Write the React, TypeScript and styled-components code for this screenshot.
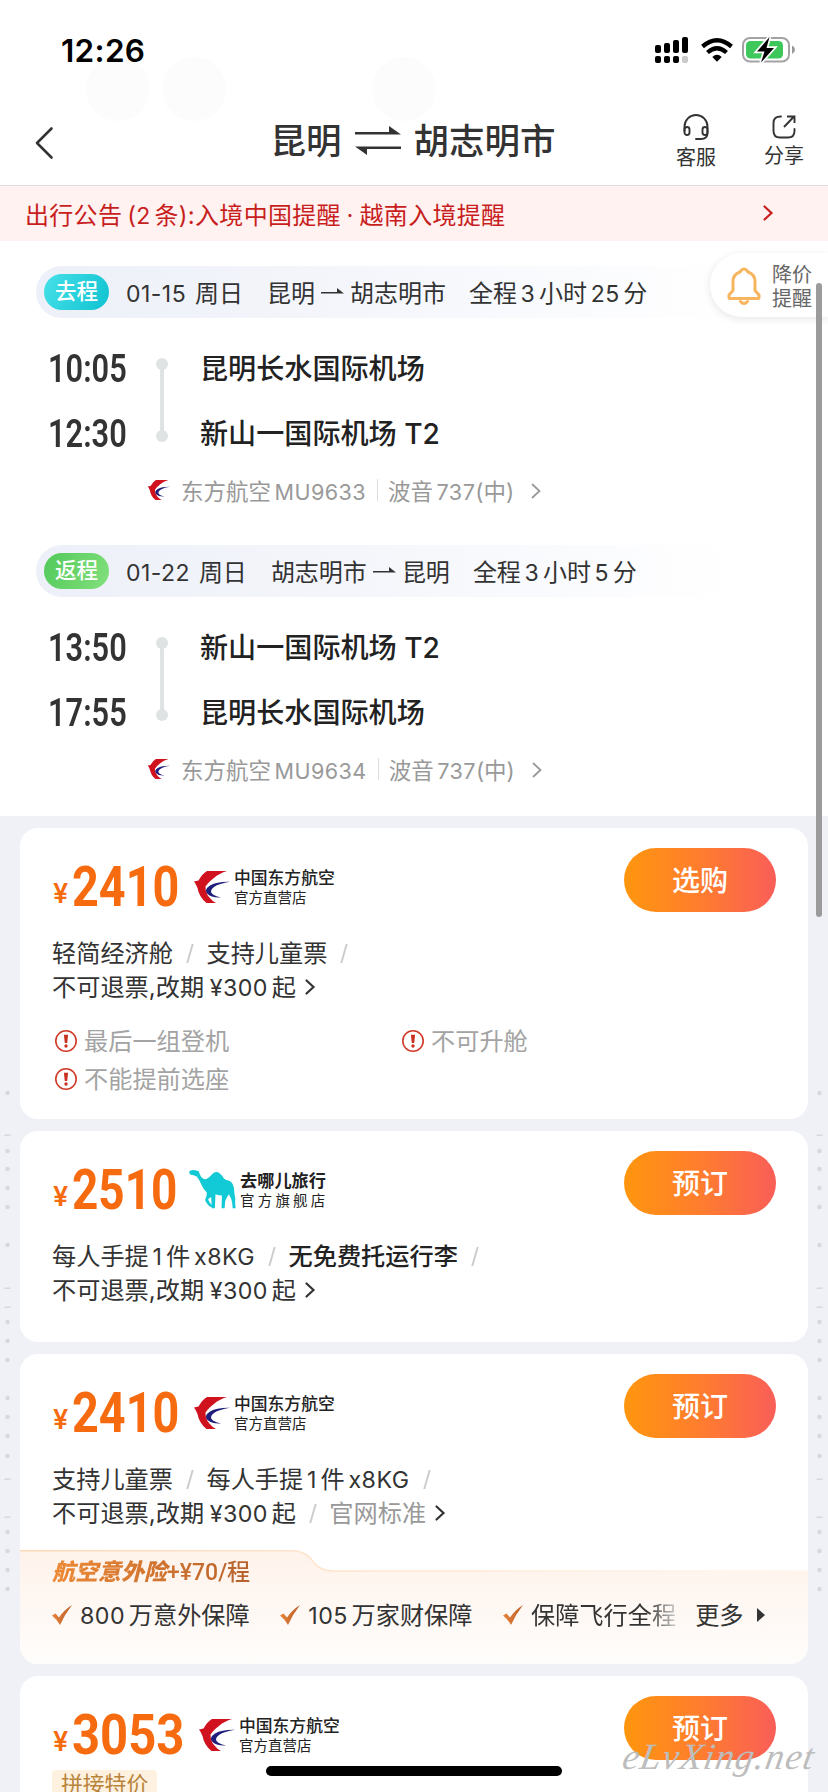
import React from 'react';
import styled, { createGlobalStyle } from 'styled-components';

const Global = createGlobalStyle`
  * { box-sizing: border-box; }
  body { margin: 0; background: #fff; }
`;

const sans = `Inter, "Noto Sans CJK SC", sans-serif`;

const Screen = styled.div`
  position: relative;
  width: 828px;
  height: 1792px;
  overflow: hidden;
  background: #fff;
  font-family: ${sans};
  color: #333;
  white-space: nowrap;
`;

/* ---------- mixed Chinese / Latin text ---------- */

const Latin = styled.span<{ $before: number; $after: boolean }>`
  font-size: 0.96em;
  letter-spacing: 0.02em;
  margin-left: ${(p) => p.$before}em;
  margin-right: ${(p) => (p.$after ? '0.16em' : '0')};
`;

function Mixed({ children }: { children: string }) {
  const parts = children.split(/([0-9A-Za-z¥-]+)/);
  const isHan = (c?: string) => !!c && /[\u4e00-\u9fff]/.test(c);
  return (
    <>
      {parts.map((part, i) =>
        i % 2 ? (
          <Latin
            key={i}
            $before={isHan(parts[i - 1].slice(-1)) ? (part[0] === '¥' ? 0.24 : 0.16) : 0}
            $after={isHan(parts[i + 1][0])}
          >
            {part}
          </Latin>
        ) : (
          part
        ),
      )}
    </>
  );
}

/* ---------- icons ---------- */

const Svg = styled.svg`
  display: block;
  flex: none;
  overflow: visible;
`;

function Chevron({ w = 8, h = 14, color = '#333', stroke = 2 }) {
  return (
    <Svg width={w} height={h} viewBox={`0 0 ${w} ${h}`} fill="none" stroke={color} strokeWidth={stroke}>
      <path d={`M0.5 0.5 L${w - 0.5} ${h / 2} L0.5 ${h - 0.5}`} strokeLinecap="round" />
    </Svg>
  );
}

function EasternLogo({ width, height }: { width: number; height: number }) {
  return (
    <Svg width={width} height={height} viewBox="0 0 36 32">
      <path
        fill="#d0121f"
        d="M0 10.500 L4.500 9.500 Q8 3 13 0 L33 0 Q25 2.500 20.500 6.500 Q14 11.500 11.500 15.500 Q11.500 22 15 26 Q18 30 22 32 L12.500 32 Q5 26 3.500 17 Q2 13 0 10.500Z"
      />
      <path fill="#20207c" d="M36 10.800 Q25 12.500 20 16 Q14.500 20 19 23.500 Q22 25.500 27 26.500 Q17 27 13 22.500 Q10 18.500 16 14.500 Q23 10.500 36 10.800Z" />
    </Svg>
  );
}

function CamelLogo() {
  return (
    <Svg width={47} height={39} viewBox="0 0 140 116">
      <path
        fill="#12c9d6"
        d="M0 5 Q3 1 13 0 Q24 1 29 4 Q31 12 36 20 Q42 29 52 27 Q60 23 68 13 Q80 1 92 10 Q99 16 104 25 Q110 31 120 32 Q132 38 134 56 Q135 72 138 84 Q136 98 139 114 L130 114 Q130 98 126 86 Q122 78 119 72 Q112 80 108 92 L106 114 L97 114 L98 76 Q88 76 79 72 L77 114 L68 114 L66 80 L57 86 Q59 96 72 108 L66 111 Q52 102 48 89 Q54 78 53 67 Q43 58 37 44 Q31 28 23 19 Q14 14 3 13 Z"
      />
    </Svg>
  );
}

function HeadsetIcon() {
  return (
    <Svg width={26} height={26} viewBox="0 0 26 26" fill="none" stroke="#333" strokeWidth="1.9">
      <path d="M1.500 16 V11.500 A11 11 0 0 1 24.500 11.500 V18 Q24.500 24 18 24 H13" strokeLinecap="round" />
      <rect x="1.500" y="12" width="5" height="8" rx="2.500" />
      <rect x="19.500" y="12" width="5" height="8" rx="2.500" />
    </Svg>
  );
}

function ShareIcon() {
  return (
    <Svg width={24} height={24} viewBox="0 0 24 24" fill="none" stroke="#333" strokeWidth="1.900">
      <path d="M9 1.500 Q1.500 1.500 1.500 8 V16 Q1.500 22.500 8 22.500 H16 Q22.500 22.500 22.500 16 V14" strokeLinecap="round" />
      <path d="M12 12 L21.500 2 M15 1.500 H22.500 V8" />
    </Svg>
  );
}

function SwapIcon() {
  return (
    <Svg width={46} height={29} viewBox="0 0 46 29" fill="#333">
      <path d="M0 8.500 H46 L34 0 V6 H0Z M46 20.500 H0 L12 29 V23 H46Z" />
    </Svg>
  );
}

function BellIcon() {
  return (
    <Svg width={34} height={38} viewBox="0 0 34 38" fill="none" stroke="#f8b55f" strokeWidth="3">
      <path d="M2 30.500 V28 L6 23.500 V14.500 Q6 7.500 13 5 Q17 -1 21 5 Q28 7.500 28 14.500 V23.500 L32 28 V30.500 Q32 31.500 31 31.500 H3 Q2 31.500 2 30.500Z" strokeLinejoin="round" />
      <path d="M13.500 34.500 Q17 38.500 20.500 34.500" strokeLinecap="round" />
    </Svg>
  );
}

function CheckIcon() {
  return (
    <Svg width={20} height={20} viewBox="0 0 20 20">
      <defs>
        <linearGradient id="check" x1="0" y1="0" x2="1" y2="0">
          <stop offset="0" stopColor="#e8833a" />
          <stop offset="1" stopColor="#b9602c" />
        </linearGradient>
      </defs>
      <path fill="url(#check)" d="M0 10.500 L3.500 8.500 L7 12.500 Q12 5 20 0 Q13 9 8 20 Q5 14.500 0 10.500Z" />
    </Svg>
  );
}

function WarnIcon() {
  return (
    <Svg width={22} height={22} viewBox="0 0 22 22">
      <circle cx="11" cy="11" r="10.200" fill="none" stroke="#d03a28" strokeWidth="1.600" />
      <path d="M8.900 4.800 H13.100 L12.200 13 H9.800Z" fill="#c9301f" />
      <circle cx="11" cy="16" r="1.700" fill="#c9301f" />
    </Svg>
  );
}

function SignalIcon() {
  return (
    <Svg width={34} height={26} viewBox="0 0 34 26">
      <rect x="0" y="8" width="6" height="8" rx="2" />
      <rect x="9" y="6" width="6" height="10" rx="2" />
      <rect x="18" y="3" width="6" height="13" rx="2" />
      <rect x="27" y="0" width="6" height="16" rx="2" />
      <rect x="0" y="19" width="6" height="7" rx="2" />
      <rect x="9" y="19" width="6" height="7" rx="2" />
      <rect x="18" y="19" width="6" height="7" rx="2" />
      <rect x="27" y="19" width="6" height="7" rx="2" fill="#c9c9c9" />
    </Svg>
  );
}

function WifiIcon() {
  return (
    <Svg width={32} height={24} viewBox="0 0 32 24" fill="none" stroke="#000" strokeWidth="4.300">
      <path d="M1.500 8.500 Q16 -4 30.500 8.500" />
      <path d="M6.500 14.500 Q16 6.200 25.500 14.500" />
      <path d="M11.300 19 Q16 14.500 20.700 19 L16 23.800Z" fill="#000" stroke="none" />
    </Svg>
  );
}

function BatteryIcon() {
  return (
    <Svg width={53} height={26} viewBox="0 0 53 26">
      <rect x="1" y="1" width="46" height="23.500" rx="7" fill="#fff" stroke="#a3a3a3" strokeWidth="2" />
      <rect x="4" y="4" width="37" height="17.500" rx="4.500" fill="#3ec85b" />
      <path d="M50 8.500 Q53 10 53 12.800 Q53 15.500 50 17Z" fill="#999" />
      <path d="M27.500 0 L15 14.500 H22.500 L19 25.500 L32 11 H24.500Z" stroke="#fff" strokeWidth="3.400" />
      <path d="M27.500 0 L15 14.500 H22.500 L19 25.500 L32 11 H24.500Z" />
    </Svg>
  );
}

/* ---------- status bar and header ---------- */

const StatusBar = styled.div`
  position: relative;
  display: flex;
  justify-content: space-between;
  align-items: center;
  height: 100px;
  padding: 0 33px 0 61px;
`;
const Clock = styled.span`
  font-size: 31.500px;
  font-weight: 600;
  color: #000;
  letter-spacing: 0.3px;
`;
const StatusIcons = styled.div`
  display: flex;
  align-items: center;
  gap: 12px;
  & > :last-child { margin-left: -3px; }
`;
const Ghosts = styled.svg`
  position: absolute;
  left: 0;
  top: 50px;
`;

const Header = styled.header`
  position: relative;
  display: grid;
  grid-template-columns: 236px 1fr 236px;
  align-items: center;
  height: 85px;
`;
const Back = styled.div`
  padding: 1px 0 0 35px;
`;
const Title = styled.h1`
  display: flex;
  align-items: center;
  justify-content: center;
  gap: 13px;
  margin: -9px 2px 0 0;
  font-size: 35.5px;
  font-weight: 500;
  & > svg { margin-top: 5px; }
`;
const Actions = styled.div`
  display: flex;
  justify-content: flex-end;
  gap: 48px;
  padding-right: 24px;
`;
const Action = styled.div`
  display: flex;
  flex-direction: column;
  align-items: center;
  gap: 4px;
  font-size: 20px;
  line-height: 26px;
`;

const Notice = styled.div`
  display: flex;
  align-items: center;
  justify-content: space-between;
  height: 56px;
  padding: 0 56px 1px 25px;
  background: #fff2f0;
  border-top: 1px solid #e2dcdc;
  color: #c81e1e;
  font-size: 24px;
  letter-spacing: 0.3px;
`;
const Count = styled.span`
  margin-left: 5px;
`;
const NoticeText = styled.span`
  word-spacing: -1.300px;
`;

/* ---------- itinerary ---------- */

const Itinerary = styled.section`
  display: flex;
  flex-direction: column;
  gap: 29px;
  height: 575px;
  padding: 25px 0 0 36px;
`;
const LegBar = styled.div`
  display: flex;
  align-items: center;
  width: 704px;
  height: 52px;
  padding: 0 0 2px 8px;
  border-radius: 26px 0 0 26px;
  background: linear-gradient(90deg, #edf0f8, #f4f6fb 45%, #fff);
  font-size: 24px;
`;
const LegTag = styled.span<{ $tone: 'out' | 'back' }>`
  width: 65px;
  height: 36px;
  margin: 2px 17px 0 0;
  border-radius: 18px;
  text-align: center;
  line-height: 34px;
  font-size: 21.500px;
  font-weight: 500;
  color: #fff;
  background: ${(p) =>
    p.$tone === 'out' ? 'linear-gradient(115deg, #46e0e8, #10c3d1)' : 'linear-gradient(115deg, #52c95a, #82e07c)'};
`;
const LegDate = styled.span`
  margin-right: 24px;
  word-spacing: 2px;
`;
const LegRoute = styled.span`
  display: flex;
  align-items: center;
  gap: 6px;
  margin-right: 23px;
`;
const Stops = styled.div`
  display: grid;
  grid-template-columns: 80px 72px 1fr;
  grid-template-rows: 65px 65px;
  align-items: center;
  margin-top: 18px;
  padding-left: 12px;
`;
const StopLine = styled.div`
  grid-column: 2;
  grid-row: 1 / 3;
  padding: 0 0 2px 28px;
`;
const Airport = styled.span`
  grid-column: 3;
  padding-bottom: 5px;
  font-size: 28.100px;
  font-weight: 500;
  color: #222;
`;
const Condensed = styled.span<{ $size: number; $scale: number; $width: number; $weight: number }>`
  display: inline-block;
  width: ${(p) => p.$width}px;
  font-family: Roboto, sans-serif;
  font-size: ${(p) => p.$size}px;
  font-weight: ${(p) => p.$weight};
  line-height: 1;
  transform: scaleX(${(p) => p.$scale});
  transform-origin: left center;
`;
const Carrier = styled.div`
  display: flex;
  align-items: center;
  height: 50px;
  padding: 0 0 2px 111px;
  font-size: 22.500px;
  color: #999;
  & > svg:first-child { margin: 0 10px 0 0; }
  & > svg:last-child { margin: 2px 0 0 18px; }
`;
const Divider = styled.i`
  width: 1px;
  height: 22px;
  margin: 0 10px 0 11px;
  background: #ddd;
`;

interface LegData {
  tone: 'out' | 'back';
  tag: string;
  date: string;
  from: string;
  to: string;
  total: string;
  stops: [string, string][];
  flight: string;
}

function Leg({ leg }: { leg: LegData }) {
  return (
    <div>
      <LegBar>
        <LegTag $tone={leg.tone}>{leg.tag}</LegTag>
        <LegDate>
          <Mixed>{leg.date}</Mixed>
        </LegDate>
        <LegRoute>
          {leg.from}
          <Svg width={23} height={8} viewBox="0 0 23 8" fill="#333">
            <path d="M0 5 H16 V1 L23 6.500 H0Z" />
          </Svg>
          {leg.to}
        </LegRoute>
        <span>
          <Mixed>{leg.total}</Mixed>
        </span>
      </LegBar>
      <Stops>
        {leg.stops.map(([time, airport], i) => (
          <React.Fragment key={time}>
            <Condensed $size={38} $scale={0.81} $width={80} $weight={600}>
              {time}
            </Condensed>
            {i === 0 && (
              <StopLine>
                <Svg width={12} height={84} viewBox="0 0 12 84" fill="#dfe3e4">
                  <circle cx="6" cy="6" r="6" />
                  <rect x="4" y="6" width="4" height="72" />
                  <circle cx="6" cy="78" r="6" />
                </Svg>
              </StopLine>
            )}
            <Airport>{airport}</Airport>
          </React.Fragment>
        ))}
      </Stops>
      <Carrier>
        <EasternLogo width={24} height={20} />
        <span>
          <Mixed>{'东方航空' + leg.flight}</Mixed>
        </span>
        <Divider />
        <span>
          <Mixed>波音737(中)</Mixed>
        </span>
        <Chevron w={8} h={14} color="#999" stroke={1.8} />
      </Carrier>
    </div>
  );
}

const legs: LegData[] = [
  {
    tone: 'out', tag: '去程', date: '01-15 周日', from: '昆明', to: '胡志明市', total: '全程3小时25分',
    stops: [['10:05', '昆明长水国际机场'], ['12:30', '新山一国际机场 T2']], flight: 'MU9633',
  },
  {
    tone: 'back', tag: '返程', date: '01-22 周日', from: '胡志明市', to: '昆明', total: '全程3小时5分',
    stops: [['13:50', '新山一国际机场 T2'], ['17:55', '昆明长水国际机场']], flight: 'MU9634',
  },
];

const PriceAlert = styled.div`
  position: absolute;
  top: 253px;
  right: 0;
  display: flex;
  align-items: center;
  gap: 11px;
  width: 118px;
  height: 64px;
  padding: 4px 0 0 17px;
  border-radius: 32px 0 0 32px;
  background: #fff;
  box-shadow: 0 2px 8px rgba(0, 0, 0, 0.1);
  font-size: 20px;
  line-height: 24px;
  color: #666;
  & > svg { margin-top: -2px; }
`;

/* ---------- offers ---------- */

const Offers = styled.main`
  display: flex;
  flex-direction: column;
  gap: 12px;
  height: 976px;
  padding: 12px 20px 0;
  background: #eff1f6;
`;
const Card = styled.article<{ $height: number }>`
  flex: none;
  height: ${(p) => p.$height}px;
  border-radius: 18px;
  background: #fff;
  overflow: hidden;
`;
const CardTop = styled.div`
  display: flex;
  align-items: flex-start;
  justify-content: space-between;
  height: 108px;
  padding: 20px 32px 0 33px;
`;
const PriceRow = styled.div`
  display: flex;
  align-items: center;
  height: 77px;
  color: #f76b10;
`;
const Yen = styled.span`
  width: 19px;
  padding-top: 13px;
  font-size: 27px;
  font-weight: 600;
  line-height: 1;
`;
const Vendor = styled.div`
  display: flex;
  flex-direction: column;
  margin-left: 4px;
  padding-top: 2px;
  color: #222;
`;
const VendorName = styled.span<{ $bold?: boolean }>`
  font-size: ${(p) => (p.$bold ? 17.200 : 16.800)}px;
  font-weight: ${(p) => (p.$bold ? 700 : 500)};
  line-height: 20px;
`;
const VendorSub = styled.span<{ $spaced?: boolean }>`
  font-size: 14.500px;
  line-height: 20px;
  letter-spacing: ${(p) => (p.$spaced ? 3.2 : 0)}px;
`;
const BuyButton = styled.button`
  width: 152px;
  height: 64px;
  padding: 0 0 3px;
  border: 0;
  border-radius: 32px;
  background: linear-gradient(90deg, #ff960e, #ff7d2e 50%, #f95e58);
  color: #fff;
  font-family: ${sans};
  font-size: 28px;
  font-weight: 500;
`;
const Line = styled.div`
  display: flex;
  align-items: center;
  height: 34px;
  padding: 0 0 4px 32px;
  font-size: 24.200px;
  & > svg { margin: 3px 0 0 10px; }
`;
const Slash = styled.i`
  width: 1.500px;
  height: 19px;
  margin: 4px 16px 0 16px;
  background: #ccc;
  transform: skewX(-16deg);
`;
const Strong = styled.span`
  font-weight: 500;
  color: #222;
`;
const Muted = styled.span`
  color: #999;
`;
const Warnings = styled.div`
  display: grid;
  grid-template-columns: 347px 1fr;
  grid-auto-rows: 38px;
  margin-top: 18px;
  padding-left: 35px;
  font-size: 24.200px;
  color: #a3a3a3;
`;
const Warning = styled.div`
  display: flex;
  align-items: center;
  gap: 7px;
  padding-bottom: 4px;
  & > svg { margin-top: 4px; }
`;

interface OfferProps {
  price: string;
  priceWidth: number;
  priceScale?: number;
  vendor?: 'eastern' | 'qunar';
  action: string;
  height: number;
  children: React.ReactNode;
}

function Offer({ price, priceWidth, priceScale = 0.835, vendor = 'eastern', action, height, children }: OfferProps) {
  const qunar = vendor === 'qunar';
  return (
    <Card $height={height}>
      <CardTop>
        <PriceRow>
          <Yen>¥</Yen>
          <Condensed $size={56} $scale={priceScale} $width={priceWidth} $weight={700}>
            {price}
          </Condensed>
          {qunar ? <CamelLogo /> : <EasternLogo width={36} height={32} />}
          <Vendor>
            <VendorName $bold={qunar}>{qunar ? '去哪儿旅行' : '中国东方航空'}</VendorName>
            <VendorSub $spaced={qunar}>{qunar ? '官方旗舰店' : '官方直营店'}</VendorSub>
          </Vendor>
        </PriceRow>
        <BuyButton>{action}</BuyButton>
      </CardTop>
      {children}
    </Card>
  );
}

const Insurance = styled.div`
  position: relative;
  height: 114px;
  margin-top: 20px;
`;
const InsuranceShape = styled.svg`
  position: absolute;
  left: 0;
  top: 0;
`;
const InsuranceTitle = styled.div`
  position: relative;
  display: inline-block;
  height: 42px;
  padding: 0 4px 0 1px;
  margin-left: 31px;
  line-height: 44px;
  font-size: 23px;
  font-weight: 900;
  font-style: italic;
  color: transparent;
  background: linear-gradient(90deg, #ee8a35, #b5602c);
  background-clip: text;
  -webkit-background-clip: text;
`;
const TitlePrice = styled.span`
  font-family: Roboto, "Noto Sans CJK SC", sans-serif;
  font-size: 23px;
  font-weight: 500;
  font-style: normal;
`;
const Benefits = styled.div`
  position: relative;
  display: flex;
  align-items: center;
  height: 44px;
  padding: 0 43px 2px 32px;
  font-size: 24.200px;
  & > svg { margin-top: 3px; }
`;
const Benefit = styled.span<{ $fade?: boolean }>`
  margin: 0 30.500px 0 8px;
  ${(p) =>
    p.$fade &&
    'margin-right: 19px; color: transparent; background: linear-gradient(90deg, #333 80%, #ccc); -webkit-background-clip: text; background-clip: text;'}
`;
const Triangle = styled.i`
  margin: 3px 0 0 auto;
  border: solid transparent;
  border-width: 7px 0 7px 8px;
  border-left-color: #333;
`;
const PromoTag = styled.span`
  display: inline-block;
  height: 32px;
  margin: -14px 0 0 32px;
  padding: 0 9px;
  border-radius: 4px;
  background: #fff1e0;
  color: #b8843a;
  font-size: 21.800px;
  line-height: 29px;
  vertical-align: top;
`;

/* ---------- overlays ---------- */

const Gutter = styled.svg`
  position: absolute;
  left: 0;
  top: 0;
  pointer-events: none;
`;
const dots = [1093, 1151, 1169, 1188, 1207, 1245, 1322, 1341, 1360, 1398, 1417, 1436, 1456, 1532, 1551, 1570, 1589];
const dashes = [1135, 1288, 1307, 1479, 1517];

const ScrollThumb = styled.div`
  position: absolute;
  left: 816px;
  top: 283px;
  width: 6px;
  height: 634px;
  border-radius: 3px;
  background: #9b9b9c;
`;
const HomeBar = styled.div`
  position: absolute;
  left: 266px;
  top: 1766px;
  width: 296px;
  height: 10px;
  border-radius: 5px;
  background: #000;
`;
const SiteMark = styled.div`
  position: absolute;
  left: 623px;
  top: 1735px;
  font-family: "Liberation Serif", serif;
  font-style: italic;
  font-size: 37px;
  line-height: 44px;
  letter-spacing: 1.300px;
  color: #bdbdbd;
  transform: skewX(-10deg);
`;

export default function App() {
  return (
    <Screen>
      <Global />
      <Ghosts width="450" height="80" fill="#fcfcfc">
        <circle cx="118" cy="39" r="32" />
        <circle cx="194" cy="39" r="32" />
        <circle cx="404" cy="39" r="32" />
      </Ghosts>
      <StatusBar>
        <Clock>12:26</Clock>
        <StatusIcons>
          <SignalIcon />
          <WifiIcon />
          <BatteryIcon />
        </StatusIcons>
      </StatusBar>
      <Header>
        <Back>
          <Svg width={18} height={32} viewBox="0 0 18 32" fill="none" stroke="#333" strokeWidth="2.600">
            <path d="M16.500 1.500 L2 16 L16.500 30.500" strokeLinecap="round" strokeLinejoin="round" />
          </Svg>
        </Back>
        <Title>
          昆明
          <SwapIcon />
          胡志明市
        </Title>
        <Actions>
          <Action>
            <HeadsetIcon />
            客服
          </Action>
          <Action>
            <ShareIcon />
            分享
          </Action>
        </Actions>
      </Header>
      <Notice>
        <NoticeText>
          出行公告
          <Count>
            <Mixed>(2条)</Mixed>
          </Count>
          :入境中国提醒 · 越南入境提醒
        </NoticeText>
        <Chevron w={8} h={14} color="#c81e1e" stroke={2.2} />
      </Notice>
      <Itinerary>
        {legs.map((leg) => (
          <Leg key={leg.tag} leg={leg} />
        ))}
      </Itinerary>
      <PriceAlert>
        <BellIcon />
        <span>
          降价
          <br />
          提醒
        </span>
      </PriceAlert>
      <Offers>
        <Offer price="2410" priceWidth={122} action="选购" height={291}>
          <Line>轻简经济舱<Slash />支持儿童票<Slash /></Line>
          <Line>
            <span><Mixed>不可退票,改期¥300起</Mixed></span>
            <Chevron w={8} h={14} stroke={2.2} />
          </Line>
          <Warnings>
            <Warning><WarnIcon />最后一组登机</Warning>
            <Warning><WarnIcon />不可升舱</Warning>
            <Warning><WarnIcon />不能提前选座</Warning>
          </Warnings>
        </Offer>
        <Offer price="2510" priceWidth={117} priceScale={0.82} vendor="qunar" action="预订" height={211}>
          <Line>
            <span><Mixed>每人手提1件x8KG</Mixed></span>
            <Slash />
            <Strong>无免费托运行李</Strong>
            <Slash />
          </Line>
          <Line>
            <span><Mixed>不可退票,改期¥300起</Mixed></span>
            <Chevron w={8} h={14} stroke={2.2} />
          </Line>
        </Offer>
        <Offer price="2410" priceWidth={122} action="预订" height={310}>
          <Line>
            支持儿童票
            <Slash />
            <span><Mixed>每人手提1件x8KG</Mixed></span>
            <Slash />
          </Line>
          <Line>
            <span><Mixed>不可退票,改期¥300起</Mixed></span>
            <Slash />
            <Muted>官网标准</Muted>
            <Chevron w={8} h={14} stroke={2.2} />
          </Line>
          <Insurance>
            <InsuranceShape width="788" height="114" viewBox="0 0 788 114">
              <defs>
                <linearGradient id="peach" x1="0" y1="0" x2="0" y2="1">
                  <stop offset="0" stopColor="#fff3eb" />
                  <stop offset="0.550" stopColor="#fef8f4" />
                  <stop offset="1" stopColor="#fffdfb" />
                </linearGradient>
                <linearGradient id="edge" x1="0" y1="0" x2="1" y2="0">
                  <stop offset="0" stopColor="#fbd9b8" />
                  <stop offset="1" stopColor="#fff6ef" />
                </linearGradient>
              </defs>
              <path fill="url(#peach)" d="M0 0.500 H272 Q284 0.500 291 9 Q299 21 312 21 H788 V114 H0Z" />
              <path fill="none" stroke="url(#edge)" strokeWidth="1.500" d="M0 0.800 H272 Q284 0.800 291 9 Q299 21 312 21 H788" />
            </InsuranceShape>
            <InsuranceTitle>
              航空意外险<TitlePrice>+¥70/程</TitlePrice>
            </InsuranceTitle>
            <Benefits>
              <CheckIcon />
              <Benefit><Mixed>800万意外保障</Mixed></Benefit>
              <CheckIcon />
              <Benefit><Mixed>105万家财保障</Mixed></Benefit>
              <CheckIcon />
              <Benefit $fade>保障飞行全程</Benefit>
              更多
              <Triangle />
            </Benefits>
          </Insurance>
        </Offer>
        <Offer price="3053" priceWidth={127} priceScale={0.875} action="预订" height={240}>
          <PromoTag>拼接特价</PromoTag>
        </Offer>
      </Offers>
      <Gutter width="828" height="1792" fill="#d6d8df">
        {[7.5, 819.5].map((x) => (
          <g key={x}>
            {dots.map((y) => (
              <circle key={y} cx={x} cy={y} r="2.200" />
            ))}
            {dashes.map((y) => (
              <rect key={y} x={x - 3} y={y - 0.5} width="6" height="1.500" />
            ))}
          </g>
        ))}
      </Gutter>
      <ScrollThumb />
      <HomeBar />
      <SiteMark>eLvXing.net</SiteMark>
    </Screen>
  );
}
